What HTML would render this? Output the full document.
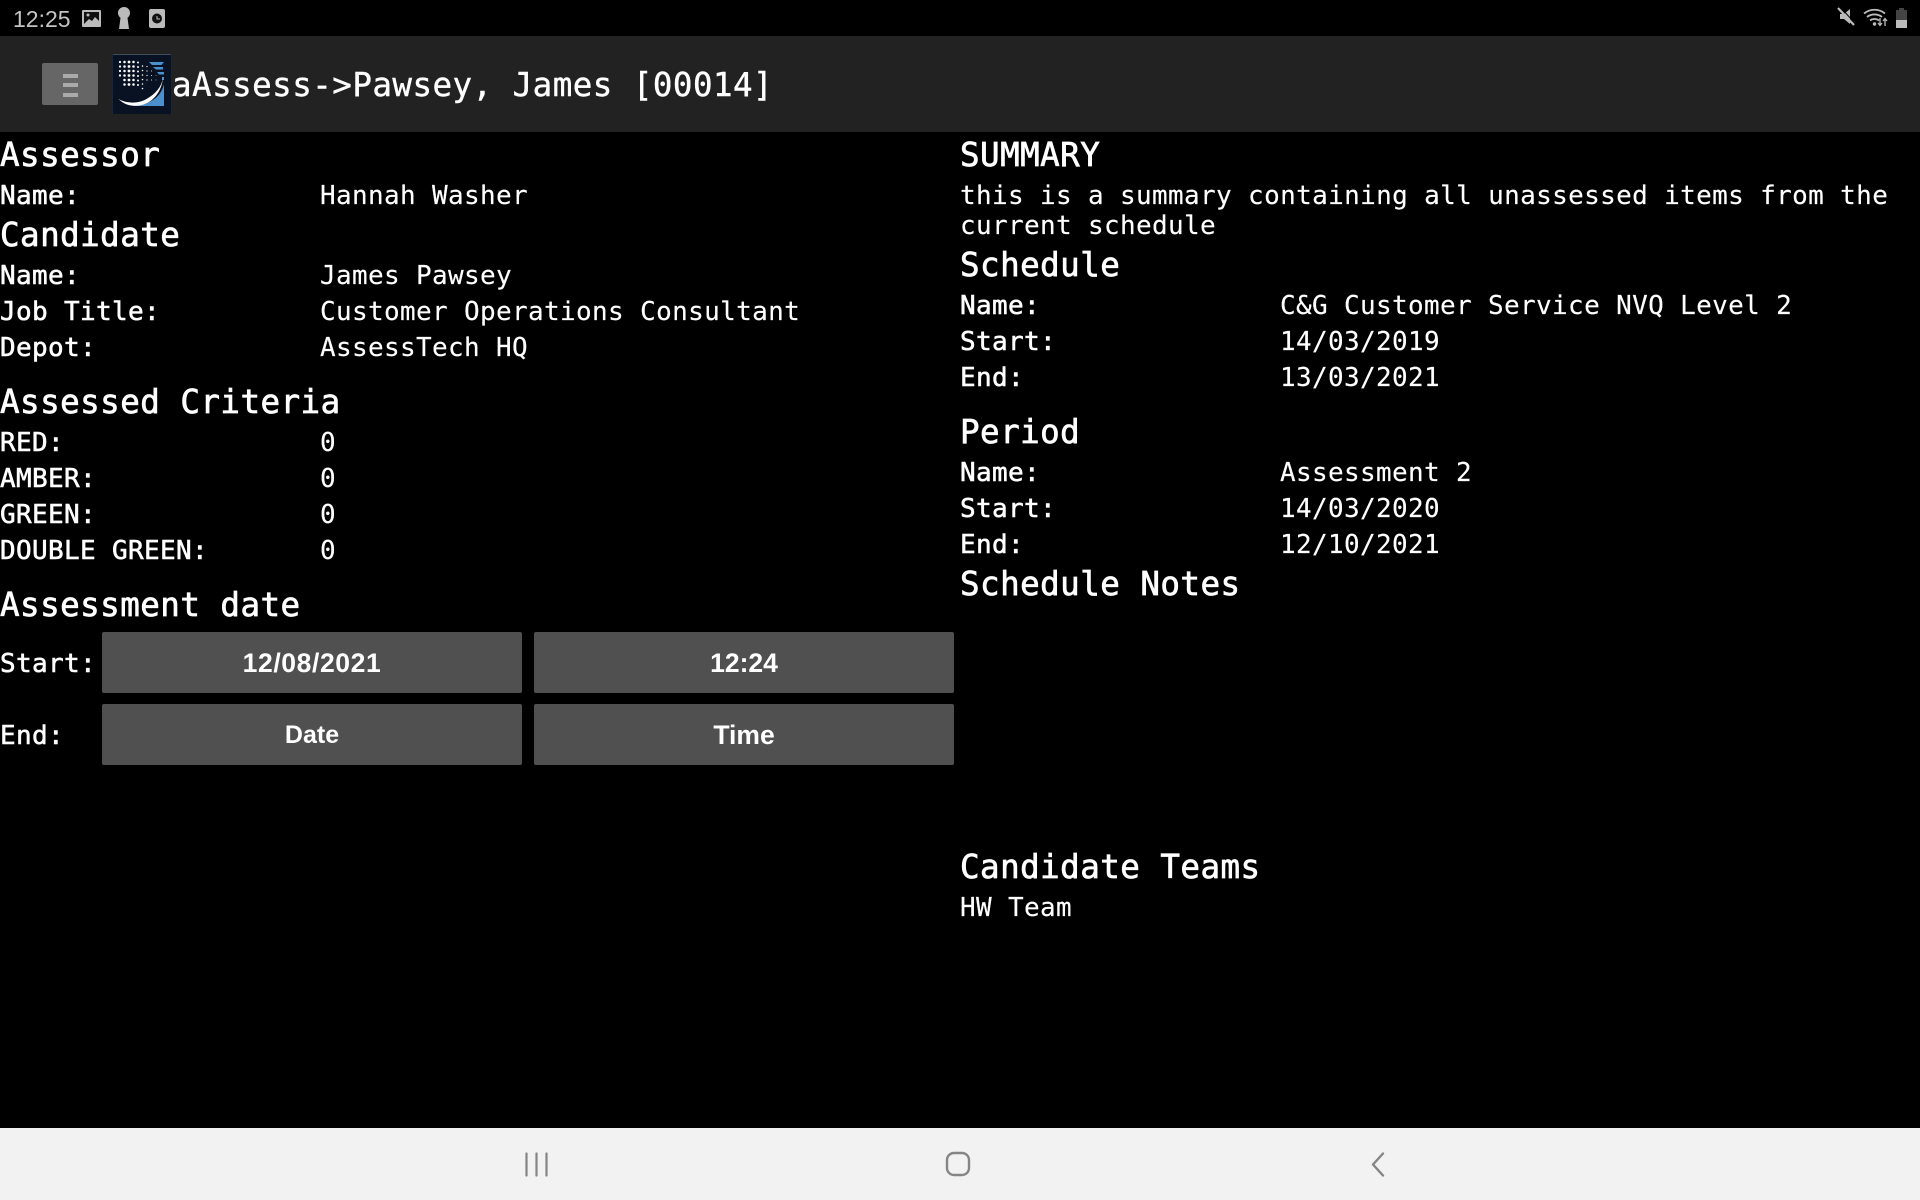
<!DOCTYPE html>
<html lang="en"><head><meta charset="utf-8"><title>aAssess</title>
<style>
html,body{margin:0;padding:0;background:#000;width:1920px;height:1200px;overflow:hidden}
.t,.h,.l{position:absolute;font-family:"DejaVu Sans Mono","Liberation Mono",monospace;color:#fff;white-space:pre;line-height:40px;margin-top:1px}
.t,.l{font-size:26px;letter-spacing:.35px}
.t{-webkit-text-stroke:.15px #fff}
.l{-webkit-text-stroke:.55px #fff}
.h{font-size:32.5px;letter-spacing:.47px;-webkit-text-stroke:.7px #fff;margin-top:0}
.b{position:absolute;background:#505050;border-radius:2px;color:#fff;font:bold 26.5px/62px "Liberation Sans",sans-serif;text-align:center;height:60.500px;width:420px}
.abs{position:absolute}
</style></head><body>
<div class="abs" style="left:0;top:36px;width:1920px;height:96px;background:#222"></div>
<div class="abs" style="left:13px;top:4px;font:23px/30px 'Liberation Sans',sans-serif;color:#c4c4c4">12:25</div>
<svg class="abs" style="left:80px;top:6px" width="90" height="26" viewBox="0 0 90 26">
<rect x="2" y="4" width="19" height="17" fill="#bbb" rx="1"/><rect x="4" y="6" width="15" height="13" fill="#111"/><path d="M4 18l5-5 3 2 3-4 4 4v4H4z" fill="#bbb"/><circle cx="8" cy="9" r="1.5" fill="#bbb"/>
<path d="M44 1c-3.500 0-6 2.500-6 6 0 2 1 3.700 2.500 4.700L39 23h10l-1.500-11.300C49 10.700 50 9 50 7c0-3.500-2.500-6-6-6z" fill="#bbb"/>
<rect x="69" y="3" width="16" height="19" rx="2" fill="#bbb"/><circle cx="77" cy="12.500" r="5" fill="#111"/><path d="M77 10v3h3" stroke="#bbb" stroke-width="1" fill="none"/>
</svg>
<svg class="abs" style="left:1836px;top:5px" width="76" height="24" viewBox="0 0 76 24">
<path d="M3 8h4l6-5v15L7 13H3z" fill="#bbb" transform="translate(1 1)"/><path d="M2 3l16 17" stroke="#bbb" stroke-width="2.200"/><path d="M2 3l16 17" stroke="#000" stroke-width="1" transform="translate(1.500 -1.500)"/>
<path d="M28 8.500c6-5 15-5 21 0M31 12c4-3.400 11-3.400 15 0M34 15.500c2.500-2 6.500-2 9 0" stroke="#bbb" stroke-width="1.800" fill="none"/><circle cx="38.500" cy="19" r="1.700" fill="#bbb"/>
<path d="M44 13v7m-2-2l2 2.500 2-2.500M49 21v-7m-2 2l2-2.500 2 2.500" stroke="#bbb" stroke-width="1.300" fill="none"/>
<path d="M60 5h3V3h5v2h3v18H60z" fill="#444"/><rect x="60" y="15" width="11" height="8" fill="#bbb"/>
</svg>
<div class="abs" style="left:42px;top:63px;width:56px;height:42px;background:#666;border-radius:2px"></div>
<div class="abs" style="left:63px;top:74px;width:15px;height:4px;background:#aaa"></div>
<div class="abs" style="left:63px;top:83px;width:15px;height:4px;background:#aaa"></div>
<div class="abs" style="left:63px;top:93px;width:15px;height:3.500px;background:#aaa"></div>
<svg class="abs" style="left:112px;top:54px" width="60" height="60" viewBox="0 0 60 60">
<rect width="60" height="60" fill="#081222"/><path d="M0 .5h60" stroke="#3f4c5c"/><path d="M.5 0v60M59.500 0v60" stroke="#1a2636"/>
<path d="M37 8h15l-2.500 3H40zM41 13h10v2.500H44zM45 18h7v2.500H47zM50 23h2v3h-2z" fill="#4a90cf"/>
<path d="M52 30v22H22c14-1 27-8 30-22z" fill="#4a90cf"/>
<path d="M6.500 45c8 4.500 19 5 28 0 9-5 15-12 16.500-21-1 10-6 19-14 24-10 6-23 5-30.500-3z" fill="#fff"/>
<g fill="none" stroke="#fff" stroke-linecap="round">
<path d="M8 8v14" stroke-width="2.200" stroke-dasharray="0 4.500"/>
<path d="M12.500 8v27" stroke-width="2.500" stroke-dasharray="0 4.500"/>
<path d="M17 8v27" stroke-width="2.800" stroke-dasharray="0 4.500"/>
<path d="M21.500 8v27" stroke-width="2.500" stroke-dasharray="0 4.500"/>
<path d="M26 8.500v27" stroke-width="2" stroke-dasharray="0 4.500"/>
<path d="M30.500 12v23" stroke-width="1.600" stroke-dasharray="0 4.500"/>
<path d="M35 12.500v18" stroke-width="1.300" stroke-dasharray="0 4.500"/>
<path d="M39.500 17v13" stroke-width="1" stroke-dasharray="0 4.500"/>
<path d="M44 21.500v9" stroke-width=".8" stroke-dasharray="0 4.500"/>
</g></svg>
<div class="h" style="left:172px;top:65px;-webkit-text-stroke:.4px #fff">aAssess-&gt;Pawsey, James [00014]</div>

<div class="h" style="left:0;top:135px">Assessor</div>
<div class="l" style="left:0;top:175px">Name:</div><div class="t" style="left:320px;top:175px">Hannah Washer</div>
<div class="h" style="left:0;top:215px">Candidate</div>
<div class="l" style="left:0;top:255px">Name:</div><div class="t" style="left:320px;top:255px">James Pawsey</div>
<div class="l" style="left:0;top:291px">Job Title:</div><div class="t" style="left:320px;top:291px">Customer Operations Consultant</div>
<div class="l" style="left:0;top:327px">Depot:</div><div class="t" style="left:320px;top:327px">AssessTech HQ</div>
<div class="h" style="left:0;top:382px">Assessed Criteria</div>
<div class="l" style="left:0;top:422px">RED:</div><div class="t" style="left:320px;top:422px">0</div>
<div class="l" style="left:0;top:458px">AMBER:</div><div class="t" style="left:320px;top:458px">0</div>
<div class="l" style="left:0;top:494px">GREEN:</div><div class="t" style="left:320px;top:494px">0</div>
<div class="l" style="left:0;top:530px">DOUBLE GREEN:</div><div class="t" style="left:320px;top:530px">0</div>
<div class="h" style="left:0;top:585px">Assessment date</div>
<div class="l" style="left:0;top:643px">Start:</div>
<div class="l" style="left:0;top:715px">End:</div>
<div class="b" style="left:102px;top:632px;letter-spacing:.6px">12/08/2021</div>
<div class="b" style="left:534px;top:632px">12:24</div>
<div class="b" style="left:102px;top:704px;font-size:25px">Date</div>
<div class="b" style="left:534px;top:704px">Time</div>

<div class="h" style="left:960px;top:135px">SUMMARY</div>
<div class="t" style="left:960px;top:175px">this is a summary containing all unassessed items from the</div>
<div class="t" style="left:960px;top:205px">current schedule</div>
<div class="h" style="left:960px;top:245px">Schedule</div>
<div class="l" style="left:960px;top:285px">Name:</div><div class="t" style="left:1280px;top:285px">C&amp;G Customer Service NVQ Level 2</div>
<div class="l" style="left:960px;top:321px">Start:</div><div class="t" style="left:1280px;top:321px">14/03/2019</div>
<div class="l" style="left:960px;top:357px">End:</div><div class="t" style="left:1280px;top:357px">13/03/2021</div>
<div class="h" style="left:960px;top:412px">Period</div>
<div class="l" style="left:960px;top:452px">Name:</div><div class="t" style="left:1280px;top:452px">Assessment 2</div>
<div class="l" style="left:960px;top:488px">Start:</div><div class="t" style="left:1280px;top:488px">14/03/2020</div>
<div class="l" style="left:960px;top:524px">End:</div><div class="t" style="left:1280px;top:524px">12/10/2021</div>
<div class="h" style="left:960px;top:564px">Schedule Notes</div>
<div class="h" style="left:960px;top:847px">Candidate Teams</div>
<div class="t" style="left:960px;top:887px">HW Team</div>

<div class="abs" style="left:0;top:1128px;width:1920px;height:72px;background:#f2f2f2"></div>
<svg class="abs" style="left:0;top:1128px" width="1920" height="72" viewBox="0 0 1920 72">
<path d="M526.500 25.500v22M536.500 25.500v22M546.500 25.500v22" stroke="#858585" stroke-width="2.200" fill="none" stroke-linecap="round"/>
<rect x="947" y="25" width="22" height="22" rx="7" stroke="#858585" stroke-width="2.400" fill="none"/>
<path d="M1383 25.500l-10 11 10 11" stroke="#858585" stroke-width="2.400" fill="none" stroke-linecap="round" stroke-linejoin="round"/>
</svg>
</body></html>
